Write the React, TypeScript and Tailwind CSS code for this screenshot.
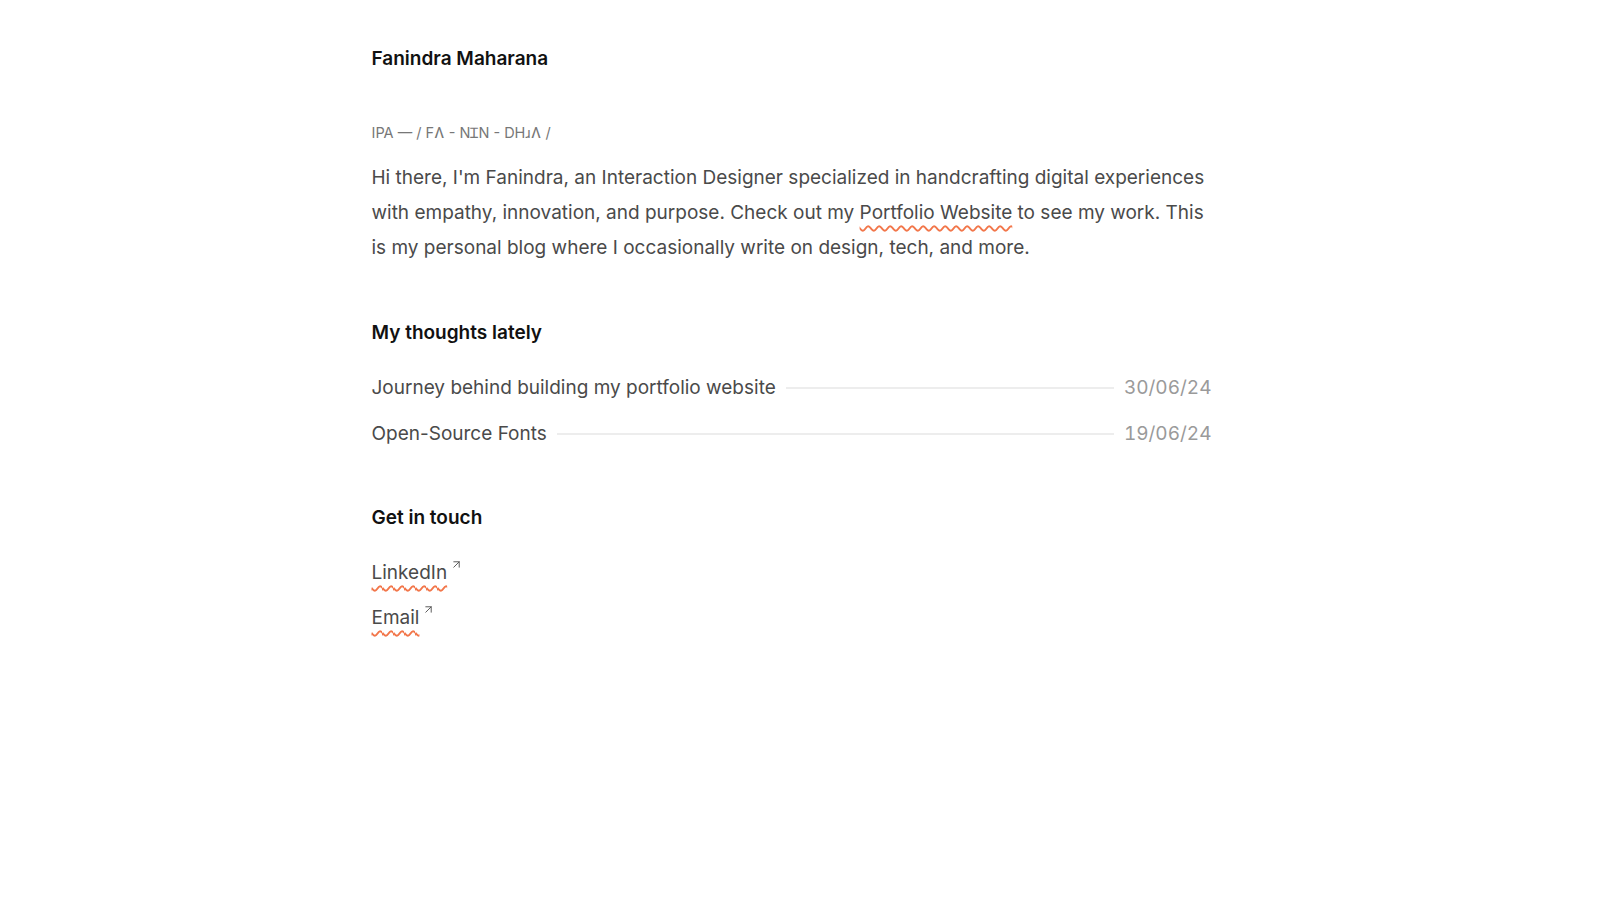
import { ArrowUpRight } from "lucide-react";

const posts = [
  { title: "Journey behind building my portfolio website", date: "30/06/24" },
  { title: "Open-Source Fonts", date: "19/06/24" },
];

const links = ["LinkedIn", "Email"];

export default function App() {
  return (
    <div className="min-h-screen bg-white pr-[17px] font-['Inter',sans-serif] antialiased">
      <main className="mx-auto w-[840px] pt-[45px]">
        <h1 className="text-[19px] leading-7 font-semibold text-[#111]">Fanindra Maharana</h1>

        <p className="mt-[50px] text-[14.5px] leading-5 uppercase text-[#777]">
          IPA — / fʌ - nɪn - dhɹʌ /
        </p>

        <p className="mt-[17px] text-[19px] leading-[35px] text-[#4a4a4a]">
          Hi there, I'm Fanindra, an Interaction Designer specialized in handcrafting digital experiences
          with empathy, innovation, and purpose. Check out my{" "}
          <a href="#" className="underline decoration-wavy decoration-[#f2764a] decoration-[1.5px] underline-offset-[6px]">
            Portfolio Website
          </a>{" "}
          to see my work. This is my personal blog where I occasionally write on design, tech, and more.
        </p>

        <h2 className="mt-[54px] text-[19px] leading-7 font-semibold text-[#111]">My thoughts lately</h2>

        <ul className="mt-[27px] flex flex-col gap-[18px]">
          {posts.map((p) => (
            <li key={p.title} className="flex items-center gap-[10px] text-[19px] leading-7">
              <span className="text-[#4a4a4a]">{p.title}</span>
              <span className="h-[2px] flex-1 bg-[#ededed]" />
              <span className="text-[#9a9a9a] tabular-nums">{p.date}</span>
            </li>
          ))}
        </ul>

        <h2 className="mt-[56px] text-[19px] leading-7 font-semibold text-[#111]">Get in touch</h2>

        <ul className="mt-[27px] flex flex-col gap-[17px]">
          {links.map((l) => (
            <li key={l} className="flex items-start text-[19px] leading-7">
              <a
                href="#"
                className="text-[#4a4a4a] underline decoration-wavy decoration-[#f2764a] decoration-[1.5px] underline-offset-[6px]"
              >
                {l}
              </a>
              <ArrowUpRight className="ml-[3px] mt-[-1px] h-[13px] w-[13px] text-[#555]" strokeWidth={1.75} />
            </li>
          ))}
        </ul>
      </main>
    </div>
  );
}
